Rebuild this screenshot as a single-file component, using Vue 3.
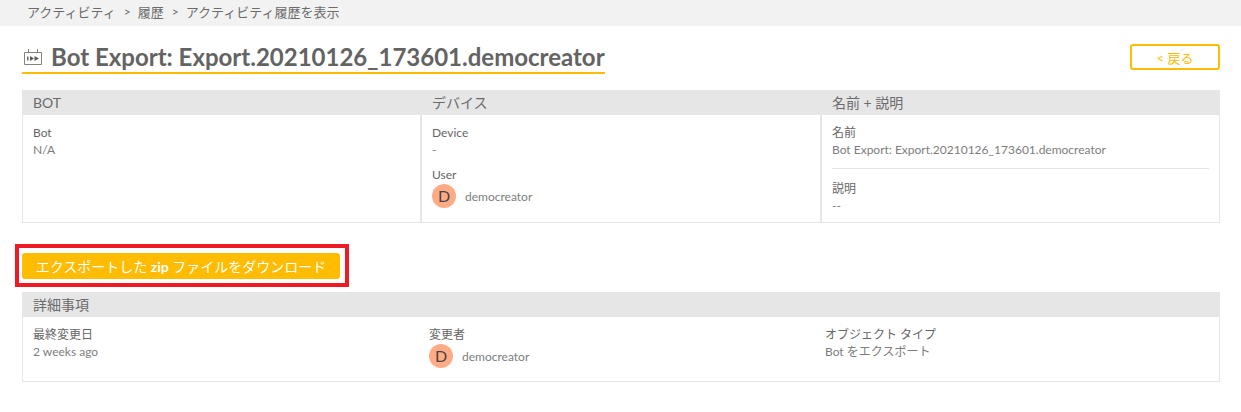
<script setup>
const crumbs = ['アクティビティ', '履歴', 'アクティビティ履歴を表示']
</script>

<template>
  <div class="page">
    <nav class="crumbs">
      <template v-for="(c, i) in crumbs" :key="c">
        <span v-if="i" class="sep">&gt;</span>
        <span>{{ c }}</span>
      </template>
    </nav>

    <div class="title-row">
      <h1 class="title">
        <svg class="title-icon" width="20" height="18" viewBox="0 0 20 18" fill="none">
          <path d="M1.5 4.5h17v12h-17z" stroke="#8a8078" stroke-width="1" />
          <path d="M5.5 1v3M14.5 1v3" stroke="#8a8078" stroke-width="1" />
          <path d="M4 8.500h1.500v4H4z" fill="#6b6561" />
          <path d="M7 8l4 2.500L7 13zM11.500 8l4.500 2.500-4.500 2.500z" fill="#5f5a56" />
        </svg>
        <span>Bot Export: Export.20210126_173601.democreator</span>
      </h1>
      <button class="back">&lt; 戻る</button>
    </div>

    <section class="panel">
      <div class="heads three">
        <div>BOT</div>
        <div>デバイス</div>
        <div>名前 + 説明</div>
      </div>
      <div class="cells three">
        <div class="cell">
          <div class="label">Bot</div>
          <div class="value">N/A</div>
        </div>
        <div class="cell">
          <div class="label">Device</div>
          <div class="value">-</div>
          <div class="label second">User</div>
          <div class="user">
            <span class="avatar">D</span>
            <span class="value">democreator</span>
          </div>
        </div>
        <div class="cell">
          <div class="label">名前</div>
          <div class="value">Bot Export: Export.20210126_173601.democreator</div>
          <hr class="rule" />
          <div class="label">説明</div>
          <div class="value">--</div>
        </div>
      </div>
    </section>

    <div class="highlight">
      <button class="download">エクスポートした <b>zip</b> ファイルをダウンロード</button>
    </div>

    <section class="panel details">
      <div class="heads"><div>詳細事項</div></div>
      <div class="detail-grid">
        <div>
          <div class="label">最終変更日</div>
          <div class="value">2 weeks ago</div>
        </div>
        <div>
          <div class="label">変更者</div>
          <div class="user">
            <span class="avatar">D</span>
            <span class="value">democreator</span>
          </div>
        </div>
        <div>
          <div class="label">オブジェクト タイプ</div>
          <div class="value">Bot をエクスポート</div>
        </div>
      </div>
    </section>
  </div>
</template>

<style scoped>
.page {
  width: 1241px;
  height: 412px;
  overflow: hidden;
  background: #fff;
  color: #666;
  font-family: Lato, "Noto Sans CJK JP", sans-serif;
  font-size: 12px;
}
.crumbs {
  height: 26px;
  box-sizing: border-box;
  background: #f2f2f2;
  padding: 3px 0 0 27px;
  font-size: 13px;
  line-height: 18px;
  color: #6b6b6b;
  display: flex;
}
.sep {
  margin: 0 7px 0 8px;
  font-size: 12px;
}
.title-row {
  display: flex;
  justify-content: space-between;
  align-items: flex-start;
  margin: 15px 21px 0 22px;
}
.title {
  margin: 0;
  height: 31px;
  box-sizing: content-box;
  border-bottom: 2px solid #ffbc00;
  display: flex;
  align-items: center;
  font-size: 24px;
  font-weight: 700;
  line-height: 31px;
  color: #636363;
  white-space: nowrap;
}
.title-icon {
  margin: 0 8px 0 1px;
}
.back {
  width: 90px;
  height: 26px;
  margin-top: 3px;
  padding: 0;
  border: 2px solid #ffbc00;
  border-radius: 3px;
  background: #fff;
  color: #ffbc00;
  font: inherit;
  font-size: 13px;
}
.panel {
  margin: 16px 21px 0 22px;
  border: solid #e6e6e6;
  border-width: 0 1px 1px 1px;
}
.heads {
  height: 25px;
  margin: 0 -1px;
  background: #e6e6e6;
  font-size: 14px;
  line-height: 25px;
  color: #6b6b6b;
}
.heads > div {
  padding-left: 11px;
}
.three {
  display: grid;
  grid-template-columns: 399px 400px 1fr;
}
.cells {
  height: 107px;
}
.cell {
  padding: 9px 10px 0 10px;
  border-right: 2px solid #e6e6e6;
  min-width: 0;
}
.cell:last-child {
  border-right: 0;
}
.label {
  line-height: 17px;
  color: #666;
}
.value {
  line-height: 17px;
  color: #7d7d7d;
}
.second {
  margin-top: 8px;
}
.user {
  display: flex;
  align-items: center;
  gap: 9px;
  margin-top: 1px;
}
.avatar {
  width: 24px;
  height: 24px;
  border-radius: 50%;
  background: #ffab85;
  color: #444;
  font-size: 16px;
  line-height: 24px;
  text-align: center;
}
.rule {
  height: 1px;
  margin: 10px 0 11px;
  border: 0;
  background: #e3e3e3;
}
.highlight {
  width: 334px;
  height: 43px;
  box-sizing: border-box;
  margin: 21px 0 0 15px;
  border: 4px solid #ed1c24;
  padding: 5px 0 0 3px;
}
.download {
  display: block;
  width: 318px;
  height: 26px;
  padding: 0;
  border: 0;
  border-radius: 3px;
  background: #ffbc00;
  color: #fff;
  font: inherit;
  font-size: 14px;
  white-space: nowrap;
}
.details {
  margin-top: 5px;
}
.detail-grid {
  height: 64px;
  box-sizing: border-box;
  padding: 9px 0 0 10px;
  display: grid;
  grid-template-columns: 396px 396px 1fr;
}
</style>

<style>
html, body { margin: 0; background: #fff; }
</style>
